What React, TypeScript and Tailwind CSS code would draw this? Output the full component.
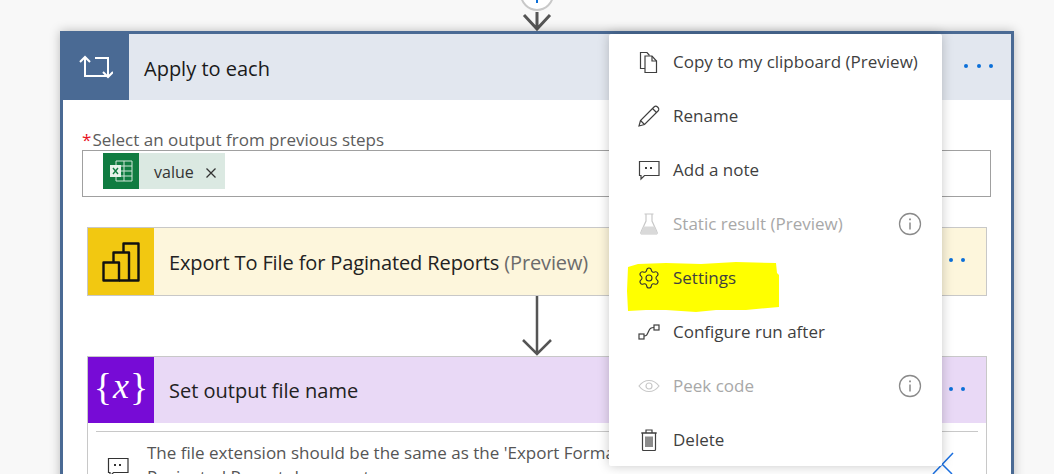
import { ReactNode } from 'react'
import { Settings } from 'lucide-react'

const font = { fontFamily: '"Segoe UI", "Open Sans", sans-serif' }

const Dots = () => (
  <div className="flex gap-[8.3px]">
    <span className="w-[4px] h-[4px] rounded-full bg-[#0b6fd8]" />
    <span className="w-[4px] h-[4px] rounded-full bg-[#0b6fd8]" />
    <span className="w-[4px] h-[4px] rounded-full bg-[#0b6fd8]" />
  </div>
)

const s = { fill: 'none', stroke: 'currentColor', strokeWidth: 1.2 }

const CopyIcon = () => (
  <svg width="22" height="22" viewBox="0 0 22 22" {...s}>
    <path d="M7 17.5H2.5V1.500h6.500l2.500 3" />
    <path d="M7 5h7l4.500 5v11.500H7z" />
    <path d="M14 5v5h4.500" />
  </svg>
)
const PencilIcon = () => (
  <svg width="22" height="22" viewBox="0 0 22 22" {...s}>
    <path d="M1 21l1.500-5.500L16 2c1-1 2.500-1 3.500 0l.5.5c1 1 1 2.500 0 3.500L6.500 19.500z" />
    <path d="M2.500 15.500l4 4M14.500 3.500l4 4" />
  </svg>
)
const NoteIcon = () => (
  <svg width="22" height="22" viewBox="0 0 22 22" {...s}>
    <path d="M1.500 2.500h19.500v14H6.500l-3.500 3.500v-3.500H1.500z" />
    <path d="M8 8v2M13 8v2" strokeWidth="2" />
  </svg>
)
const FlaskIcon = () => (
  <svg width="22" height="22" viewBox="0 0 22 22" fill="none" stroke="#c8c8c8" strokeWidth="1.2">
    <path d="M6.500 1h9M8 1v7L3 19c-.5 1 0 2 1 2h14c1 0 1.500-1 1-2L14 8V1" />
    <path d="M5.500 13.500h11l3 7.500H2.500z" fill="#d9d9d9" stroke="none" />
  </svg>
)
const RunAfterIcon = () => (
  <svg width="22" height="22" viewBox="0 0 22 22" {...s}>
    <rect x="1" y="13" width="5" height="5" />
    <rect x="16" y="4" width="5" height="5" />
    <path d="M6 15c2.500 0 3-1 4.500-4.500S13 6.500 16 6.500" />
  </svg>
)
const EyeIcon = () => (
  <svg width="22" height="22" viewBox="0 0 22 22" fill="none" stroke="#c8c8c8" strokeWidth="1.2">
    <path d="M1 11c3-4 6.500-5.500 10-5.500S18 7 21 11c-3 4-6.500 5.500-10 5.500S4 15 1 11z" />
    <circle cx="11" cy="11" r="3" />
  </svg>
)
const TrashIcon = () => (
  <svg width="22" height="22" viewBox="0 0 22 22" {...s}>
    <path d="M3 4h16M8 4V1h6v3" />
    <path d="M4.500 4v16.500c0 .500.500 1 1 1h11c.500 0 1-.500 1-1V4z" />
    <path d="M8 7.500V18M10 7.500V18M12 7.500V18M14 7.500V18" />
  </svg>
)
const InfoIcon = () => (
  <svg width="24" height="24" viewBox="0 0 24 24" fill="none" stroke="#8a8a8a" strokeWidth="1.300">
    <circle cx="12" cy="12" r="10.500" />
    <path d="M12 10.500v7" strokeWidth="1.500" />
    <path d="M12 6.500v1.800" strokeWidth="1.800" />
  </svg>
)

const menu: { label: string; icon: ReactNode; disabled?: boolean; highlight?: boolean }[] = [
  { label: 'Copy to my clipboard (Preview)', icon: <CopyIcon /> },
  { label: 'Rename', icon: <PencilIcon /> },
  { label: 'Add a note', icon: <NoteIcon /> },
  { label: 'Static result (Preview)', icon: <FlaskIcon />, disabled: true },
  { label: 'Settings', icon: <Settings size={24} strokeWidth={1.1} className="ml-[-1px]" />, highlight: true },
  { label: 'Configure run after', icon: <RunAfterIcon /> },
  { label: 'Peek code', icon: <EyeIcon />, disabled: true },
  { label: 'Delete', icon: <TrashIcon /> },
]

function Menu() {
  return (
    <div className="absolute left-[609px] top-[34px] w-[333px] h-[432px] bg-white rounded-[2px] shadow-[0_0_12px_rgba(0,0,0,0.22)] pt-[1px]">
      {menu.map(m => (
        <div key={m.label} className={`relative flex items-center h-[54px] pl-[29px] pr-[20px] text-[17px] ${m.disabled ? 'text-[#a8a8a8]' : 'text-[#3f3f3f]'}`}>
          {m.highlight && (
            // marker stroke drawn over the row
            <svg className="absolute left-[17px] top-[10px]" width="154" height="54" viewBox="0 0 154 54" fill="#ffff00">
              <path d="M2 6L12 3L40 2L75 3L110 1L150 2L151 12L153 14L153 46L120 49L90 49L70 51L40 49L20 49L2 50L1 30Z" />
            </svg>
          )}
          <span className={`relative w-[35px] flex items-center ${m.highlight ? 'text-[#333]' : ''}`}>{m.icon}</span>
          <span className="relative flex-1 whitespace-nowrap">{m.label}</span>
          {m.disabled && <InfoIcon />}
        </div>
      ))}
    </div>
  )
}

export default function App() {
  return (
    <div className="relative w-[1054px] h-[474px] overflow-hidden bg-[#f8f8f8]" style={font}>
      {/* add-step circle and arrow above the frame */}
      <div className="absolute left-[520px] top-[-23px] w-[34px] h-[34px] rounded-full border-[2px] border-[#c8c8c8] bg-white" />
      <div className="absolute left-[536px] top-[0px] w-[2px] h-[3px] bg-[#0b6fd8]" />
      <svg className="absolute left-[521px] top-[11px]" width="32" height="20" viewBox="0 0 32 20" fill="none" stroke="#555" strokeWidth="3">
        <path d="M16 1V18M3 4L16 18L29 4" />
      </svg>

      <div className="absolute left-[60px] top-[31px] w-[954px] h-[460px] border-[3px] border-[#4a6a94] bg-white shadow-[0_0_10px_rgba(0,0,0,0.25)]">
        <div className="flex h-[66px] bg-[#e2e7ef]">
          <div className="flex items-center justify-center w-[66px] bg-[#4a6a94]">
            <svg width="34" height="24" viewBox="0 0 34 24" fill="none" stroke="#fff" strokeWidth="2">
              <path d="M6 2V21H29" />
              <path d="M1 7L6 2L11 7" />
              <path d="M16 3H29V22" />
              <path d="M24 17L29 22L34 17" />
            </svg>
          </div>
          <div className="flex-1 flex items-center pl-[15px] pr-[18px] text-[20px] text-[#1a1a1a]">
            <span className="flex-1 pt-[3px]">Apply to each</span>
            <div className="pb-[2px]"><Dots /></div>
          </div>
        </div>

        <div className="pl-[19px] pr-[20px]">
          <div className="pt-[30px] text-[17px] leading-[20px] text-[#5c5c5c]">
            <span className="text-[#e81123] mr-[1px]">*</span>Select an output from previous steps
          </div>
          <div className="flex h-[47px] border border-[#a0a0a0] pl-[20px] pt-[2px]">
            <div className="flex h-[36px]">
              <div className="flex items-center justify-center w-[36px] bg-[#107c41]">
                <svg width="24" height="22" viewBox="0 0 24 22" fill="none">
                  <path d="M7 1h16v20H7z" stroke="#cfe6d8" strokeWidth="1" />
                  <path d="M15 1v20M7 6h16M7 11h16M7 16h16" stroke="#cfe6d8" strokeWidth="1" />
                  <rect x="1" y="5" width="11" height="12" fill="#e8f3ec" />
                  <path d="M4 8l5 6M9 8l-5 6" stroke="#107c41" strokeWidth="1.400" />
                </svg>
              </div>
              <div className="flex items-center w-[86px] bg-[#dbe9e2] pl-[15px] text-[16px] text-[#333]">
                <span className="pt-[2px]">value</span>
                <svg className="ml-[12px] mt-[4px]" width="10" height="10" viewBox="0 0 10 10" stroke="#333" strokeWidth="1.300">
                  <path d="M0.500 0.500L9.500 9.500M9.500 0.500L0.500 9.500" />
                </svg>
              </div>
            </div>
          </div>

          <div className="mt-[30px] ml-[5px] mr-[4px] h-[69px] flex bg-[#fdf6dc] border border-[#c8c8c8]">
            <div className="flex items-center justify-center w-[66px] bg-[#f2c811]">
              <svg width="38" height="40" viewBox="0 0 38 40" fill="none" stroke="#111" strokeWidth="2.400" strokeLinejoin="round">
                <path d="M1.500 20.500H17V38.500H1.500z" />
                <path d="M11.500 20.500V10.500H27V38.500" />
                <path d="M21.500 10.500V1.500H36.500V38.500H17" />
              </svg>
            </div>
            <div className="flex-1 flex items-center pl-[15px] pr-[21px] text-[20px] tracking-[-0.12px] text-[#222]">
              <span className="flex-1 pt-[2px]">Export To File for Paginated Reports <span className="text-[#6b6b6b]">(Preview)</span></span>
              <div className="pb-[4px]"><Dots /></div>
            </div>
          </div>

          <div className="ml-[5px] mr-[4px] flex justify-center h-[60px]">
            <svg width="32" height="60" viewBox="0 0 32 60" fill="none" stroke="#555" strokeWidth="2.500">
              <path d="M16 0V58M2 44L16 58L30 44" />
            </svg>
          </div>

          <div className="ml-[5px] mr-[4px] border border-[#c8c8c8] h-[200px]">
            <div className="flex h-[66px] bg-[#e9d9f6]">
              <div className="flex items-center justify-center w-[66px] bg-[#770bd6] text-white text-[38px] font-light leading-none" style={{ fontFamily: '"Liberation Serif", serif' }}>
                <span className="pb-[6px]">{'{'}</span>
                <span className="italic mx-[1px] pb-[8px] text-[36px]">x</span>
                <span className="pb-[6px]">{'}'}</span>
              </div>
              <div className="flex-1 flex items-center pl-[15px] pr-[21px] text-[20px] text-[#222]">
                <span className="flex-1 pt-[2px]">Set output file name</span>
                <div className="pb-[2px]"><Dots /></div>
              </div>
            </div>
            <div className="mx-[8px] mt-[8px] border-t border-[#c8c8c8] flex pl-[11px] pt-[9px] text-[17px] leading-[24px] text-[#555]">
              <div className="w-[40px] pt-[15px] shrink-0 text-[#333]"><NoteIcon /></div>
              <div className="whitespace-nowrap">The file extension should be the same as the 'Export Format' in the<br />Paginated Report document</div>
            </div>
          </div>
        </div>
      </div>

      <svg className="absolute left-[930px] top-[450px]" width="30" height="24" viewBox="0 0 30 24" fill="none" stroke="#1a6fe0" strokeWidth="1.500">
        <path d="M3 24L23 3M12 14l10 10" />
      </svg>

      <Menu />
    </div>
  )
}
